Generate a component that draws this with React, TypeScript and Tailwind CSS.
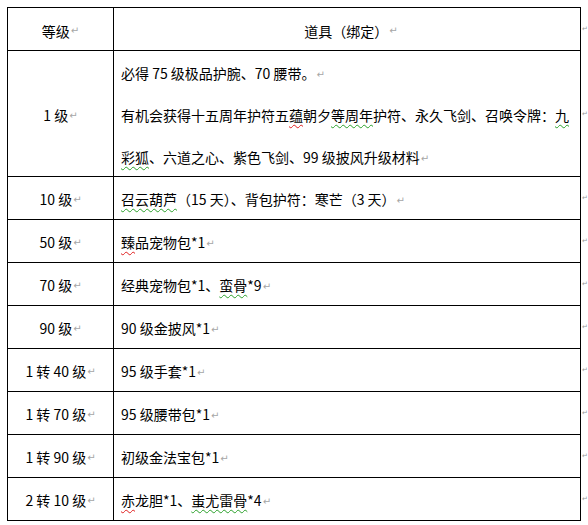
import React from "react";

const font = { fontFamily: '"Noto Sans CJK SC", "Noto Sans", sans-serif' };

function Mark() {
  return (
    <span
      className="ml-[1px] inline-block align-middle text-[10px] leading-none text-[#a6a6a6]"
      style={{ fontFamily: '"DejaVu Sans", sans-serif' }}
    >
      ↵
    </span>
  );
}

function Red({ children }: { children: React.ReactNode }) {
  return (
    <span className="underline decoration-wavy decoration-[#e02020] decoration-1 underline-offset-[3px]">
      {children}
    </span>
  );
}

function Green({ children }: { children: React.ReactNode }) {
  return (
    <span className="underline decoration-wavy decoration-[#2aa02a] decoration-1 underline-offset-[3px]">
      {children}
    </span>
  );
}

function RowMark() {
  return (
    <div className="flex w-[7px] items-center pl-[1px]">
      <span
        className="text-[7px] leading-none text-[#9a9a9a]"
        style={{ fontFamily: '"DejaVu Sans", sans-serif' }}
      >
        ↵
      </span>
    </div>
  );
}

type Row = { level: string; items: React.ReactNode };

const rows: Row[] = [
  { level: "10 级", items: <><Green>召云葫芦</Green>（15 天）、背包护符：寒芒（3 天）</> },
  { level: "50 级", items: <><Red>臻</Red>品宠物包*1</> },
  { level: "70 级", items: <>经典宠物包*1、<Green>蛮骨</Green>*9</> },
  { level: "90 级", items: <>90 级金披风*1</> },
  { level: "1 转 40 级", items: <>95 级手套*1</> },
  { level: "1 转 70 级", items: <>95 级腰带包*1</> },
  { level: "1 转 90 级", items: <>初级金法宝包*1</> },
  { level: "2 转 10 级", items: <><Red>赤</Red>龙胆*1、<Green>蚩尤雷骨</Green>*4</> },
];

export default function App() {
  return (
    <div className="min-h-[525px] w-[588px] bg-white pl-[7px] pt-[7px] text-[14px] text-black" style={font}>
      {/* header */}
      <div className="flex h-[44px]">
        <div className="flex w-[107px] items-center justify-center border border-black pt-[4px]">
          等级<Mark />
        </div>
        <div className="flex w-[467px] items-center justify-center border-y border-r border-black pl-[8px] pt-[4px]">
          道具（绑定）<Mark />
        </div>
        <RowMark />
      </div>
      {/* row 1 */}
      <div className="flex h-[126px]">
        <div className="flex w-[107px] items-center justify-center border-x border-b border-black pt-[4px]">
          1 级<Mark />
        </div>
        <div className="flex w-[467px] flex-col justify-center whitespace-nowrap border-b border-r border-black pl-[7px] pt-[3px] leading-[42px]">
          <div>必得 75 级极品护腕、70 腰带。<Mark /></div>
          <div>
            有机会获得十五周年护符五<Red>蕴</Red>朝夕<Green>等周年</Green>护符、永久飞剑、召唤令牌：<Green>九</Green>
          </div>
          <div><Green>彩狐</Green>、六道之心、紫色飞剑、99 级披风升级材料<Mark /></div>
        </div>
        <RowMark />
      </div>
      {rows.map((r) => (
        <div key={r.level} className="flex h-[43px]">
          <div className="flex w-[107px] items-center justify-center border-x border-b border-black pt-[3px]">
            {r.level}
            <Mark />
          </div>
          <div className="flex w-[467px] items-center whitespace-nowrap border-b border-r border-black pl-[7px] pt-[3px]">
            <span>
              {r.items}
              <Mark />
            </span>
          </div>
          <RowMark />
        </div>
      ))}
    </div>
  );
}
